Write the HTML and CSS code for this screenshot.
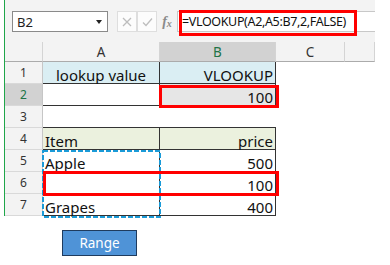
FILE: index.html
```html
<!DOCTYPE html>
<html>
<head>
<meta charset="utf-8">
<link rel="stylesheet" href="styles.css">
</head>
<body>
<div class="sheet">
  <div class="toolbar">
    <div class="namebox"><span>B2</span><svg class="caret" width="6" height="4" viewBox="0 0 6 4"><polygon points="0,0 6,0 3,4" fill="#222"/></svg></div>
    <div class="fbtns">
      <div class="fbtn"><svg width="10" height="10" viewBox="0 0 10 10"><path d="M1 1L9 9M9 1L1 9" stroke="#bdbdbd" stroke-width="1.3"/></svg></div>
      <div class="fbtn"><svg width="11" height="10" viewBox="0 0 11 10"><path d="M1 5.5L4 8.5L10 1.5" stroke="#bdbdbd" stroke-width="1.3" fill="none"/></svg></div>
      <div class="fbtn fx"><i>f</i><i class="x">x</i></div>
    </div>
    <div class="finput">=VLOOKUP(A2,A5:B7,2,FALSE)</div>
    <div class="hl hl-formula"></div>
  </div>
  <div class="grid">
    <div class="hd"></div>
    <div class="hd">A</div>
    <div class="hd sel">B</div>
    <div class="hd">C</div>
    <div class="hd"></div>

    <div class="rh">1</div>
    <div class="c t blue ctr">lookup value</div>
    <div class="c t blue r">VLOOKUP</div>
    <div class="c"></div>
    <div class="c"></div>

    <div class="rh sel">2</div>
    <div class="c t"></div>
    <div class="c t gray r">100</div>
    <div class="c"></div>
    <div class="c"></div>

    <div class="rh">3</div>
    <div class="c bb"></div>
    <div class="c bb"></div>
    <div class="c"></div>
    <div class="c"></div>

    <div class="rh">4</div>
    <div class="c t green">Item</div>
    <div class="c t green r">price</div>
    <div class="c"></div>
    <div class="c"></div>

    <div class="rh">5</div>
    <div class="c t">Apple</div>
    <div class="c t r">500</div>
    <div class="c"></div>
    <div class="c"></div>

    <div class="rh">6</div>
    <div class="c t"></div>
    <div class="c t r">100</div>
    <div class="c"></div>
    <div class="c"></div>

    <div class="rh">7</div>
    <div class="c t">Grapes</div>
    <div class="c t r">400</div>
    <div class="c"></div>
    <div class="c"></div>

    <svg class="ants" width="119" height="68" viewBox="0 0 119 68"><rect x="1" y="1" width="117" height="66" fill="none" stroke="#1b9bd8" stroke-width="2" stroke-dasharray="5 2"/></svg>
    <div class="hl hl-b2"></div>
    <div class="hl hl-row6"></div>
  </div>
</div>
<div class="below"><button class="range">Range</button></div>
</body>
</html>
```
FILE: styles.css
```css
body {
  margin: 0;
  background: #fff;
  font-family: "Noto Sans", sans-serif;
}
.sheet {
  margin-left: 4px;
  width: 370px;
  border-left: 1px solid #1fa64a;
  background: #f3f3f3;
}
.toolbar {
  position: relative;
  height: 42px;
  box-sizing: border-box;
  padding: 11px 0 0 7px;
  display: flex;
  align-items: flex-start;
}
.namebox {
  width: 96px;
  height: 21px;
  box-sizing: border-box;
  border: 1px solid #8a8a8a;
  background: #fff;
  display: flex;
  align-items: center;
  justify-content: space-between;
  padding: 0 5px 0 4px;
  font-size: 13px;
  color: #222;
}
.fbtns {
  margin-left: 9px;
  display: flex;
}
.fbtn {
  width: 20px;
  height: 21px;
  box-sizing: border-box;
  border: 1px solid #dedede;
  background: #fcfcfc;
  display: flex;
  align-items: center;
  justify-content: center;
}
.fbtn.fx {
  border: none;
  background: transparent;
  font-family: "Liberation Serif", serif;
  color: #8a8a8a;
  font-size: 14px;
  font-weight: bold;
}
.fbtn.fx .x {
  font-size: 10px;
  margin-top: 4px;
}
.finput {
  flex: 1;
  height: 21px;
  box-sizing: border-box;
  border: 1px solid #c8c8c8;
  border-right: none;
  background: #fff;
  font-size: 12.5px;
  letter-spacing: -0.35px;
  line-height: 19px;
  padding-left: 4px;
  color: #111;
  white-space: nowrap;
}
.hl {
  position: absolute;
  box-sizing: border-box;
  border: 3px solid #ff0000;
}
.hl-formula {
  left: 174px;
  top: 10px;
  width: 178px;
  height: 26px;
}
.grid {
  position: relative;
  display: grid;
  grid-template-columns: 38px 117px 116px 69px 30px;
  grid-template-rows: 20px repeat(7, 22px);
}
.hd {
  background: #f3f3f3;
  border-right: 1px solid #d4d4d4;
  border-bottom: 1px solid #ababab;
  font-size: 13.5px;
  line-height: 20px;
  text-align: center;
  color: #333;
}
.rh {
  background: #f3f3f3;
  border-right: 1px solid #c6c6c6;
  border-bottom: 1px solid #d9d9d9;
  font-size: 12px;
  line-height: 22px;
  text-align: center;
  color: #333;
}
.sel {
  background: #d2d2d2;
  color: #217346;
}
.c {
  background: #fff;
  font-size: 15px;
  line-height: 20px;
  padding: 3px 2px 0 2px;
  box-sizing: border-box;
  white-space: nowrap;
  color: #111;
}
.t {
  border-right: 1px solid #333;
  border-bottom: 1px solid #333;
}
.bb {
  border-bottom: 1px solid #333;
}
.r { text-align: right; }
.ctr { text-align: center; }
.blue { background: #daeef3; }
.green { background: #ebf1de; }
.gray { background: #e6e6e6; }
.ants {
  position: absolute;
  left: 37px;
  top: 108px;
}
.hl-b2 {
  left: 154px;
  top: 43px;
  width: 120px;
  height: 23px;
}
.hl-row6 {
  left: 38px;
  top: 129px;
  width: 236px;
  height: 25px;
}
.below {
  padding: 14px 0 0 62px;
}
.range {
  width: 75px;
  height: 26px;
  padding: 0;
  background: #4f93d7;
  border: 1px solid #1f3b5e;
  color: #fff;
  font-family: "Noto Sans", sans-serif;
  font-size: 13.5px;
}
```
